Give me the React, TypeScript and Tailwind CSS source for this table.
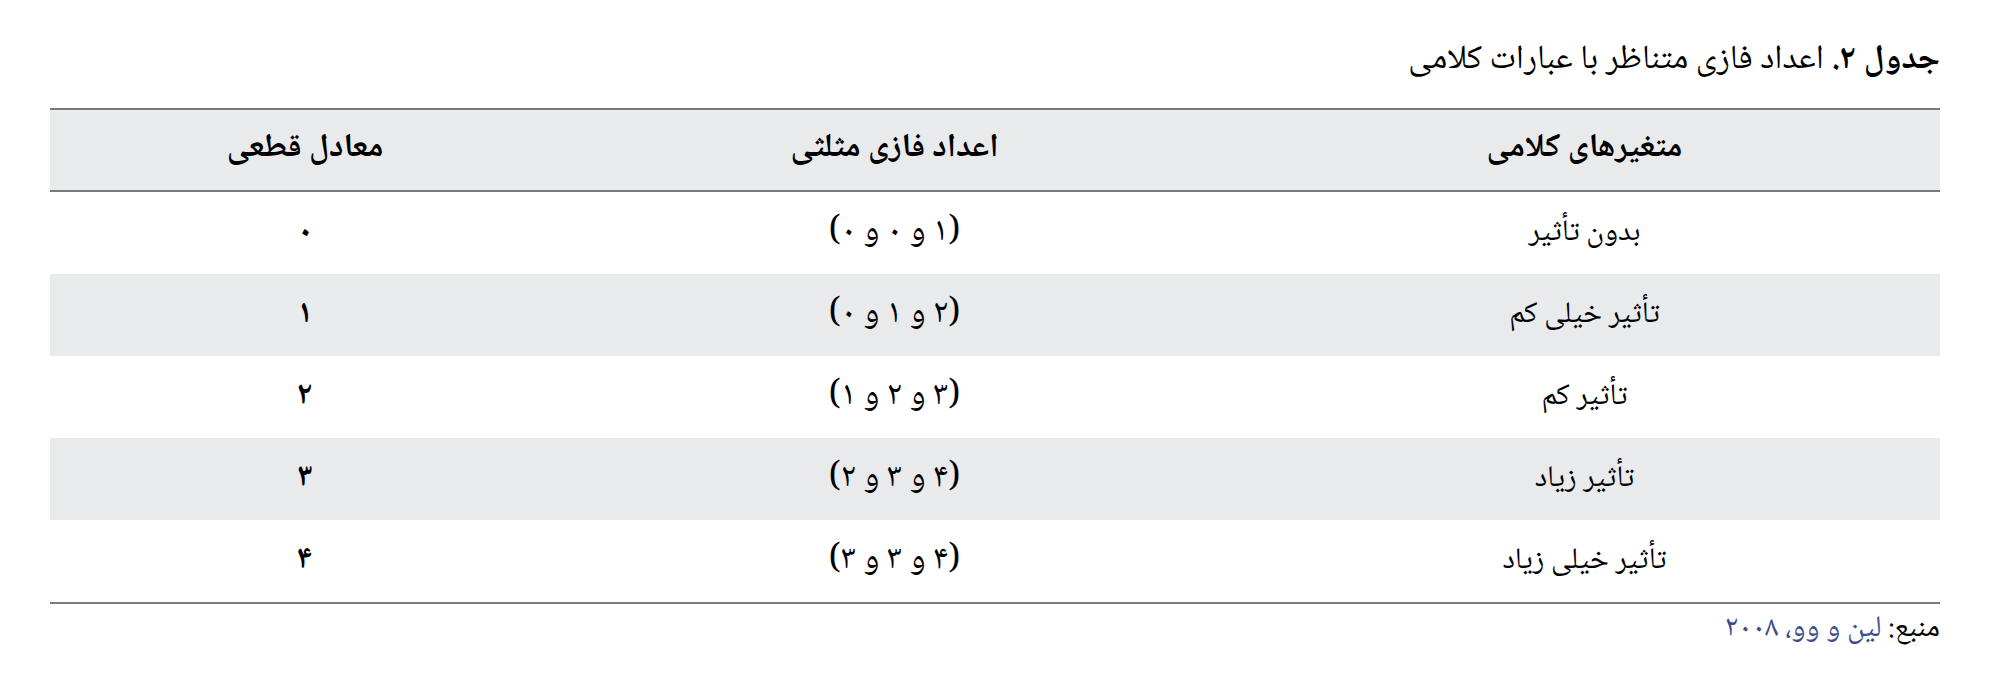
import React from "react";

const rows: [string, string, string][] = [
  ["بدون تأثیر", "(۱ و ۰ و ۰)", "۰"],
  ["تأثیر خیلی کم", "(۲ و ۱ و ۰)", "۱"],
  ["تأثیر کم", "(۳ و ۲ و ۱)", "۲"],
  ["تأثیر زیاد", "(۴ و ۳ و ۲)", "۳"],
  ["تأثیر خیلی زیاد", "(۴ و ۳ و ۳)", "۴"],
];

const font = {
  fontFamily:
    '"Noto Naskh Arabic", "Noto Sans Arabic", "DejaVu Sans", "Noto Sans", sans-serif',
};

export default function App() {
  return (
    <div
      dir="rtl"
      className="w-[1991px] h-[689px] bg-white text-black pr-[51px] pl-[50px] pt-[41px]"
      style={font}
    >
      <div className="h-[67px] text-[34px] leading-[40px]">
        <span className="font-bold">جدول ۲.</span> اعداد فازی متناظر با عبارات کلامی
      </div>
      <div className="border-t-2 border-b-2 border-[#7a7a7a]">
        <div className="grid grid-cols-[711px_669px_510px] h-[82px] bg-[#e9eaec] border-b-2 border-[#7a7a7a] items-center text-center font-bold text-[33px]">
          <div>متغیرهای کلامی</div>
          <div>اعداد فازی مثلثی</div>
          <div>معادل قطعی</div>
        </div>
        {rows.map((r, i) => (
          <div
            key={i}
            className={
              "grid grid-cols-[711px_669px_510px] h-[82px] items-center text-center " +
              (i % 2 === 1 ? "bg-[#e9eaec]" : "bg-white")
            }
          >
            <div className="text-[30px]">{r[0]}</div>
            <div className="text-[34px]">{r[1]}</div>
            <div className="font-bold text-[32px]">{r[2]}</div>
          </div>
        ))}
      </div>
      <div className="text-[30px] leading-[40px] mt-[6px]">
        منبع: <span className="text-[#3d4f8c]">لین و وو، ۲۰۰۸</span>
      </div>
    </div>
  );
}
